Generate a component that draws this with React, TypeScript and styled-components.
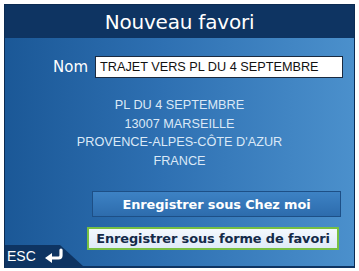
import React from 'react'
import styled, { createGlobalStyle } from 'styled-components'

const GlobalStyle = createGlobalStyle`
  html, body {
    margin: 0;
    padding: 0;
    background: #ffffff;
  }
`

const Screen = styled.div`
  position: relative;
  box-sizing: border-box;
  width: 351px;
  height: 264px;
  margin: 4px 0 0 4px;
  display: flex;
  flex-direction: column;
  border: 1px solid #0b2b52;
  border-bottom: 2px solid #0e3462;
  background: linear-gradient(90deg, #1b5897 0%, #2e70b2 45%, #4b90cc 100%);
  overflow: hidden;
`

const Header = styled.div`
  height: 33px;
  flex: none;
  display: flex;
  align-items: center;
  justify-content: center;
  background: #0e3462;
  color: #ffffff;
  font-family: 'DejaVu Sans', sans-serif;
  font-size: 20px;
  letter-spacing: -0.2px;
`

const Body = styled.div`
  flex: 1;
  display: flex;
  flex-direction: column;
  padding: 18px 11px 0 0;
`

const NameRow = styled.div`
  display: flex;
  align-items: center;
  justify-content: flex-end;
  gap: 7px;
`

const Label = styled.span`
  color: #ffffff;
  font-family: 'DejaVu Sans', sans-serif;
  font-size: 15px;
`

const Field = styled.div`
  box-sizing: border-box;
  width: 248px;
  height: 22px;
  display: flex;
  align-items: center;
  padding-left: 4px;
  background: #ffffff;
  border: 1px solid #1a2a40;
  color: #111111;
  font-family: 'Liberation Sans', sans-serif;
  font-size: 12.7px;
  white-space: nowrap;
`

const Address = styled.div`
  margin-top: 18px;
  padding-left: 11px;
  display: flex;
  flex-direction: column;
  align-items: center;
  color: #dbe9f7;
  font-family: 'Liberation Sans', sans-serif;
  font-size: 12.7px;
  line-height: 18.5px;
`

const Actions = styled.div`
  margin-top: 21px;
  display: flex;
  flex-direction: column;
  align-items: flex-end;
  gap: 10px;
  padding-right: 2px;
`

const Button = styled.div<{ $selected?: boolean }>`
  box-sizing: border-box;
  width: ${(p) => (p.$selected ? '252px' : '249px')};
  height: ${(p) => (p.$selected ? '23px' : '26px')};
  margin-right: ${(p) => (p.$selected ? '2px' : '0')};
  display: flex;
  align-items: center;
  justify-content: center;
  font-family: 'DejaVu Sans', sans-serif;
  font-weight: bold;
  font-size: 12.9px;
  letter-spacing: -0.1px;
  white-space: nowrap;
  color: ${(p) => (p.$selected ? '#142a48' : '#ffffff')};
  background: ${(p) =>
    p.$selected ? 'linear-gradient(180deg, #f4f9fe 0%, #dfeaf7 100%)' : 'linear-gradient(180deg, #3d82c4 0%, #2d6cad 100%)'};
  border: ${(p) => (p.$selected ? '2px solid #78c043' : '1px solid #1d4f86')};
`

const EscTab = styled.div`
  position: absolute;
  left: 0;
  bottom: 0;
  width: 78px;
  height: 21px;
  display: flex;
  align-items: center;
  gap: 8px;
  padding-left: 2px;
  box-sizing: border-box;
  background: #0e3462;
  clip-path: polygon(0 0, 55px 0, 78px 100%, 0 100%);
  color: #ffffff;
  font-family: 'Liberation Sans', sans-serif;
  font-size: 14px;
`

const ReturnIcon = () => (
  <svg width="20" height="15" viewBox="0 0 20 15">
    <path d="M17 2 L17 7.5 Q17 10 14.5 10 L7 10" fill="none" stroke="#ffffff" strokeWidth="3.2" strokeLinecap="round" />
    <path d="M1 10 L8 5 L8 15 Z" fill="#ffffff" />
  </svg>
)

const App = () => {
  const address = ['PL DU 4 SEPTEMBRE', '13007 MARSEILLE', "PROVENCE-ALPES-CÔTE D'AZUR", 'FRANCE']

  return (
    <>
      <GlobalStyle />
      <Screen>
        <Header>Nouveau favori</Header>
        <Body>
          <NameRow>
            <Label>Nom</Label>
            <Field>TRAJET VERS PL DU 4 SEPTEMBRE</Field>
          </NameRow>
          <Address>
            {address.map((line) => (
              <div key={line}>{line}</div>
            ))}
          </Address>
          <Actions>
            <Button>Enregistrer sous Chez moi</Button>
            <Button $selected>Enregistrer sous forme de favori</Button>
          </Actions>
        </Body>
        <EscTab>
          ESC
          <ReturnIcon />
        </EscTab>
      </Screen>
    </>
  )
}

export default App
